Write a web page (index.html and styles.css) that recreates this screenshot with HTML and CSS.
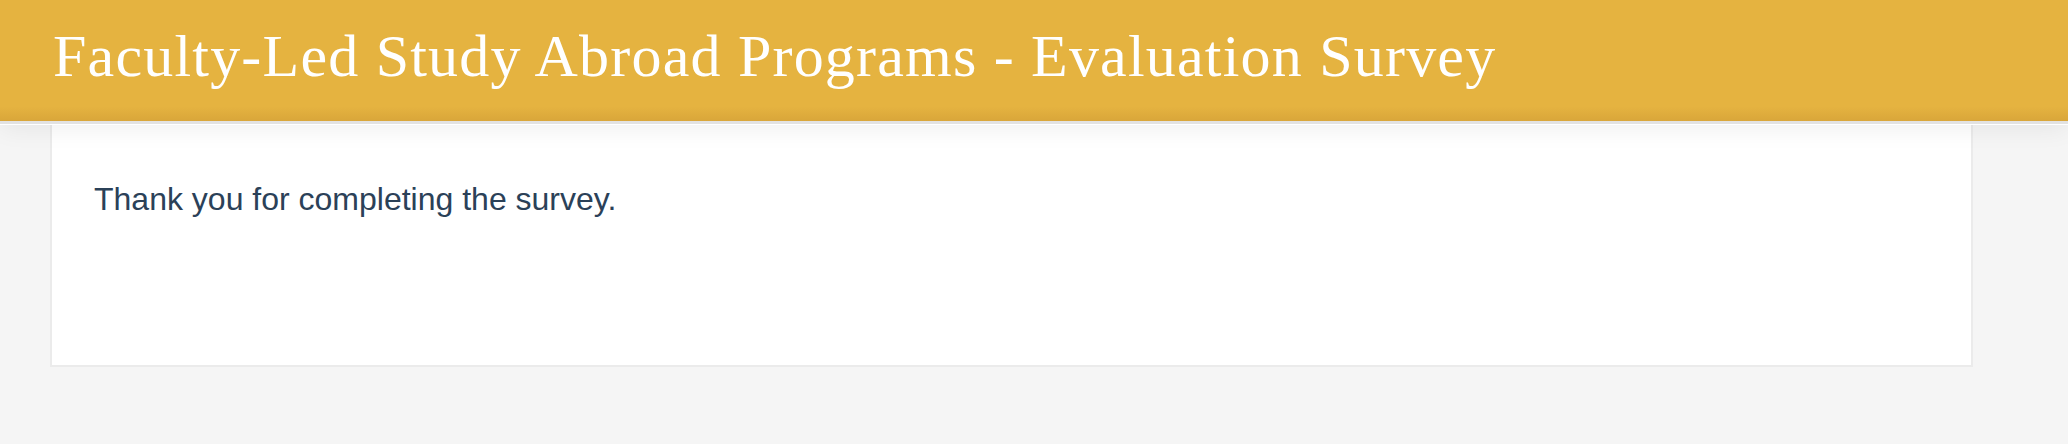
FILE: index.html
```html
<!DOCTYPE html>
<html lang="en">
<head>
<meta charset="utf-8">
<title>Faculty-Led Study Abroad Programs - Evaluation Survey</title>
<link rel="stylesheet" href="styles.css">
</head>
<body>
<header class="site-header">
  <h1 class="site-title">Faculty-Led Study Abroad Programs - Evaluation Survey</h1>
</header>
<main class="page">
  <section class="card">
    <p class="message">Thank you for completing the survey.</p>
  </section>
</main>
</body>
</html>
```

FILE: styles.css
```css
html, body {
  margin: 0;
  padding: 0;
}
body {
  background: #f5f5f5;
  font-family: "Liberation Sans", Arial, sans-serif;
  height: 444px;
  overflow: hidden;
}
.site-header {
  position: relative;
  z-index: 2;
  box-sizing: border-box;
  height: 124px;
  padding: 26px 0 0 53px;
  background: linear-gradient(to bottom, #e5b340 0%, #e5b340 88%, #d9a63a 100%);
  border-bottom: 3px solid #e2e2e2;
  box-shadow: 0 1px 0 #ffffff, 0 4px 24px rgba(0, 0, 0, 0.07);
}
.site-title {
  margin: 0;
  font-family: "Liberation Serif", "Times New Roman", serif;
  font-weight: normal;
  font-size: 60px;
  line-height: 60px;
  letter-spacing: 1.2px;
  color: #ffffff;
  white-space: nowrap;
}
.page {
  padding: 1px 0 0 50px;
  margin-top: -1px;
}
.card {
  box-sizing: border-box;
  width: 1923px;
  height: 243px;
  background: #ffffff;
  border: 2px solid #ebebeb;
  border-top: 0;
  padding: 56px 42px 0;
}
.message {
  margin: 0;
  font-size: 32px;
  line-height: 1.2;
  color: #2b4158;
}
```
